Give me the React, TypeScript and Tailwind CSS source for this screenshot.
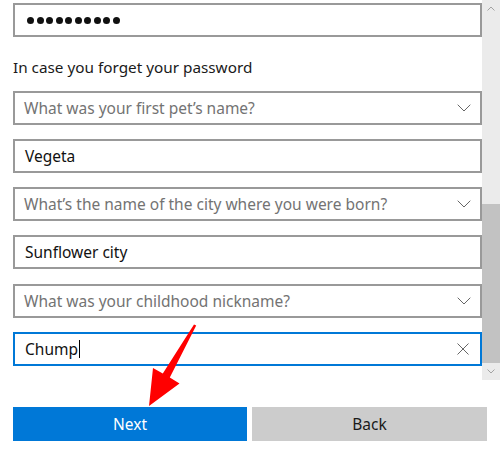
import React from "react";

const Chevron = () => (
  <svg width="14" height="8" viewBox="0 0 14 8" className="shrink-0">
    <path d="M0.7 0.7 L7 7 L13.3 0.7" fill="none" stroke="#666666" strokeWidth="1" />
  </svg>
);

const Dropdown = ({ text, className = "" }: { text: string; className?: string }) => (
  <div
    className={`h-[34px] border-2 border-[#999999] bg-white flex items-center pl-[9px] pr-[9px] justify-between ${className}`}
  >
    <span className="text-[15.5px] leading-[20px] text-[#737373] whitespace-nowrap">{text}</span>
    <Chevron />
  </div>
);

const TextBox = ({ text, className = "" }: { text: string; className?: string }) => (
  <div className={`h-[34px] border-2 border-[#999999] bg-white flex items-center pl-[10px] ${className}`}>
    <span className="text-[15.5px] leading-[20px] text-[#111111] whitespace-nowrap">{text}</span>
  </div>
);

export default function App() {
  return (
    <div className="w-[500px] h-[460px] bg-white relative overflow-hidden font-['Noto_Sans',sans-serif]">
      <div className="flex h-[380px]">
        <div className="w-[482px] pl-[13px] pt-[3px] flex flex-col">
          <div className="h-[34px] border-2 border-[#999999] bg-white flex items-center pl-[12px] gap-[2.5px]">
            {Array.from({ length: 10 }).map((_, i) => (
              <div key={i} className="w-[7px] h-[7px] rounded-full bg-[#111111]" />
            ))}
          </div>
          <div className="mt-[20px] h-[20px] text-[15.3px] leading-[20px] text-[#1a1a1a] whitespace-nowrap">
            In case you forget your password
          </div>
          <Dropdown className="mt-[14px]" text="What was your first pet’s name?" />
          <TextBox className="mt-[14px]" text="Vegeta" />
          <Dropdown className="mt-[14px]" text="What’s the name of the city where you were born?" />
          <TextBox className="mt-[14px]" text="Sunflower city" />
          <Dropdown className="mt-[15px]" text="What was your childhood nickname?" />
          <div className="mt-[14px] h-[34px] border-2 border-[#0078d7] bg-white flex items-center pl-[10px] pr-[11px] justify-between">
            <div className="flex items-center">
              <span className="text-[15.5px] leading-[20px] text-[#111111]">Chump</span>
              <div className="w-px h-[18px] bg-black ml-[1px]" />
            </div>
            <svg width="12" height="12" viewBox="0 0 12 12">
              <path d="M0.5 0.5 L11.5 11.5 M11.5 0.5 L0.5 11.5" stroke="#666666" strokeWidth="1" />
            </svg>
          </div>
        </div>
        <div className="w-[18px] h-[380px] bg-[#ebebeb] flex flex-col">
          <div className="h-[17px] flex items-center justify-center">
            <svg width="8" height="5" viewBox="0 0 8 5">
              <path d="M0.5 4.5 L4 1 L7.5 4.5" fill="none" stroke="#a3a3a3" strokeWidth="1" />
            </svg>
          </div>
          <div className="flex-1 flex flex-col">
            <div className="h-[187px]" />
            <div className="h-[159px] bg-[#c2c2c2]" />
          </div>
          <div className="h-[17px] flex items-center justify-center">
            <svg width="8" height="5" viewBox="0 0 8 5">
              <path d="M0.5 0.5 L4 4 L7.5 0.5" fill="none" stroke="#a3a3a3" strokeWidth="1" />
            </svg>
          </div>
        </div>
      </div>
      <div className="mt-[27px] pl-[13px] flex gap-[5px]">
        <button className="w-[234px] h-[34px] bg-[#0078d7] text-white text-[15.5px] leading-[20px] flex items-center justify-center">
          Next
        </button>
        <button className="w-[235px] h-[34px] bg-[#cccccc] text-[#1a1a1a] text-[15.5px] leading-[20px] flex items-center justify-center">
          Back
        </button>
      </div>
      <svg className="absolute left-0 top-0 pointer-events-none" width="500" height="460" viewBox="0 0 500 460">
        <polygon
          points="149,406 153,368 162.8,373.5 194,324.5 196.2,325.6 169.8,377.5 179.5,383.5"
          fill="#ff0000"
        />
      </svg>
    </div>
  );
}
